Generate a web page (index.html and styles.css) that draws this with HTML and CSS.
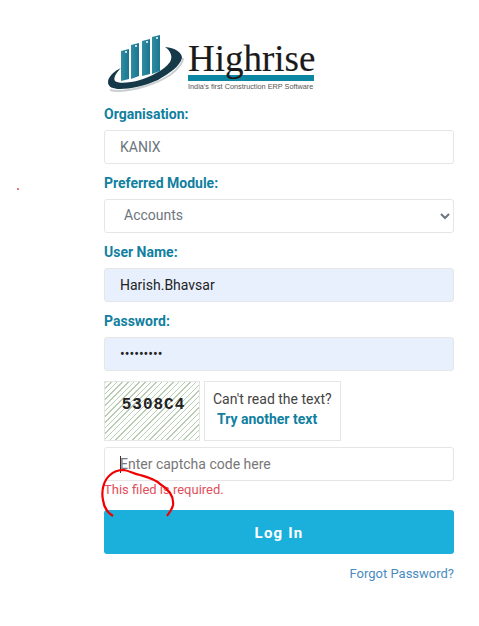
FILE: index.html
```html
<!DOCTYPE html>
<html lang="en">
<head>
    <meta charset="UTF-8">
    <meta name="viewport" content="width=device-width, initial-scale=1.0">
    <title>Highrise Login</title>
    <link rel="stylesheet" href="styles.css">
</head>
<body>
    <span class="stray-dot"></span>
    <div class="login">
        <div class="logo">
            <svg class="logo-mark" width="88" height="62" viewBox="105 33 88 62">
                <defs>
                    <linearGradient id="bar" x1="0" x2="1" y1="0" y2="0">
                        <stop offset="0" stop-color="#2f8ca2"/>
                        <stop offset="1" stop-color="#1b778f"/>
                    </linearGradient>
                </defs>
                <path d="M110 90C122 93 150 88 170 75C178 69 183 63 183 58" fill="none" stroke="#c9ced1" stroke-width="2"/>
                <path d="M165 47C175 48 182 52 182 58C180 66 170 73 158 80C145 86 130 89 120 89C113 89 108 87 108 82C108 77 114 71 121 68C116 73 113 78 115 81C118 84 130 83 140 80C152 76 164 70 170 62C173 57 171 51 165 47Z" fill="#16394a"/>
                <path d="M121 51L129 49V79L121 81Z" fill="url(#bar)"/>
                <path d="M131 45L139 43V76L131 79Z" fill="url(#bar)"/>
                <path d="M142 41L150 39V74L142 76Z" fill="url(#bar)"/>
                <path d="M152 37L160 35V71L152 74Z" fill="url(#bar)"/>
                <circle cx="126" cy="52" r="1" fill="#fff"/>
                <circle cx="136" cy="46" r="1" fill="#fff"/>
                <circle cx="147" cy="42" r="1" fill="#fff"/>
                <circle cx="157" cy="38" r="1" fill="#fff"/>
            </svg>
            <div class="logo-text">
                <div class="logo-name">Highrise</div>
                <div class="logo-rule"></div>
                <div class="logo-tag">India's first Construction ERP Software</div>
            </div>
        </div>
        <div class="field">
            <label>Organisation:</label>
            <input class="control" type="text" value="KANIX">
        </div>
        <div class="field">
            <label>Preferred Module:</label>
            <select class="control select">
                <option>Accounts</option>
            </select>
        </div>
        <div class="field">
            <label>User Name:</label>
            <input class="control filled" type="text" value="Harish.Bhavsar">
        </div>
        <div class="field">
            <label>Password:</label>
            <input class="control filled" type="password" value="123456789">
        </div>
        <div class="captcha-row">
            <div class="captcha-img">5308C4</div>
            <div class="captcha-help">
                <span>Can't read the text?</span>
                <a href="#" class="try-link">Try another text</a>
            </div>
        </div>
        <div class="captcha-input">
            <div class="control fake-input"><span class="caret"></span>Enter captcha code here</div>
            <div class="error">This filed is required.</div>
            <svg class="scribble" width="76" height="50" viewBox="100 468 76 50">
                <path d="M113 516C108 513 104 508 103 500C101 490 104 480 110 475C114 471 119 470 124 470C130 471 134 474 140 475C147 477 155 479 160 484C170 490 174 497 173 505C172 510 169 513 167 516" fill="none" stroke="#f00000" stroke-width="2.2"/>
            </svg>
        </div>
        <button class="login-btn">Log In</button>
        <div class="forgot"><a href="#">Forgot Password?</a></div>
    </div>
</body>
</html>
```

FILE: styles.css
```css
body {
    font-family: Roboto, Arial, sans-serif;
    background: #fff;
    margin: 0;
    padding: 0;
    position: relative;
    min-height: 626px;
}
.stray-dot {
    position: absolute;
    left: 17px;
    top: 188px;
    width: 2px;
    height: 2px;
    background: #e0484e;
    border-radius: 50%;
}
.login {
    width: 350px;
    margin-left: 104px;
    padding-top: 33px;
}
.logo {
    display: flex;
    align-items: flex-start;
    height: 71px;
}
.logo-mark {
    margin-left: 1px;
    flex: none;
}
.logo-text {
    width: 126px;
    margin-left: -5px;
    margin-top: 9px;
}
.logo-name {
    font-family: "Liberation Serif", serif;
    font-size: 37px;
    line-height: 33px;
    color: #1a1a1a;
    -webkit-text-stroke: 0.15px #1a1a1a;
    white-space: nowrap;
}
.logo-rule {
    height: 6px;
    background: #0b87a3;
}
.logo-tag {
    font-family: "Liberation Sans", sans-serif;
    font-size: 7.3px;
    line-height: 11px;
    color: #555;
    white-space: nowrap;
}
.field {
    margin-bottom: 9px;
}
.field label {
    display: block;
    font-size: 14px;
    font-weight: 700;
    line-height: 20px;
    color: #11809f;
    margin-bottom: 6px;
}
.control {
    display: block;
    width: 100%;
    height: 34px;
    box-sizing: border-box;
    padding: 0 15px;
    font-family: Roboto, Arial, sans-serif;
    font-size: 14px;
    color: #6c757d;
    background: #fff;
    border: 1px solid #e6e6e6;
    border-radius: 3px;
    outline: none;
}
.select {
    padding-bottom: 2px;
}
.filled {
    background: #e8f0fe;
    color: #222;
}
.captcha-row {
    display: flex;
    gap: 4px;
    height: 60px;
    margin-top: 10px;
}
.captcha-img {
    width: 96px;
    box-sizing: border-box;
    border: 1px solid #e6e6e6;
    padding-left: 3px;
    background: repeating-linear-gradient(135deg, #b9ccb4 0, #b9ccb4 1px, #fff 1px, #fff 4px);
    font-family: "Liberation Mono", monospace;
    font-size: 16px;
    font-weight: 700;
    letter-spacing: 1px;
    color: #222;
    text-align: center;
    line-height: 47px;
}
.captcha-help {
    width: 137px;
    box-sizing: border-box;
    border: 1px solid #e6e6e6;
    padding: 7px 8px 0 8px;
    font-size: 14px;
    line-height: 20px;
    color: #444;
}
.try-link {
    display: block;
    margin-left: 4px;
    font-weight: 700;
    color: #11809f;
    text-decoration: none;
}
.captcha-input {
    position: relative;
    margin-top: 6px;
}
.fake-input {
    line-height: 32px;
    color: #777;
    position: relative;
}
.caret {
    position: absolute;
    left: 15px;
    top: 8px;
    width: 1px;
    height: 17px;
    background: #333;
}
.error {
    font-size: 13px;
    line-height: 18px;
    color: #e0505a;
}
.scribble {
    position: absolute;
    left: -4px;
    top: 21px;
}
.login-btn {
    display: block;
    width: 100%;
    height: 44px;
    margin-top: 11px;
    padding-top: 3px;
    border: none;
    border-radius: 3px;
    background: #1bb0dc;
    color: #fff;
    font-family: Roboto, Arial, sans-serif;
    font-size: 15px;
    font-weight: 700;
    letter-spacing: 1.2px;
}
.forgot {
    text-align: right;
    margin-top: 11px;
    font-size: 13px;
    line-height: 18px;
}
.forgot a {
    color: #4a8bbf;
    text-decoration: none;
}
```
